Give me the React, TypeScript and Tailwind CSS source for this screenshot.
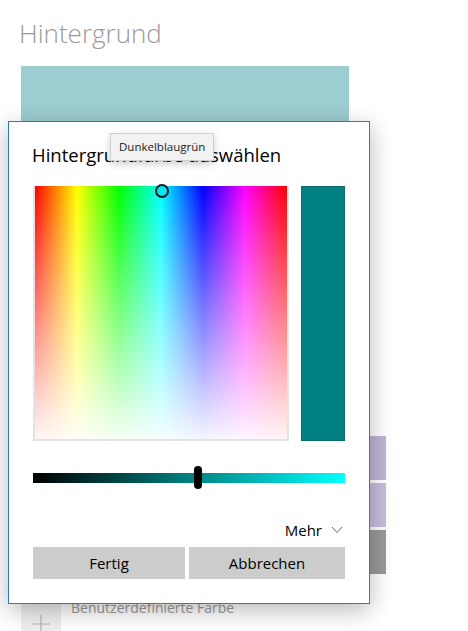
import React from 'react';

const swatchRows = [
  ['#e81123', '#ea005e', '#c30052', '#e3008c', '#bf0077', '#c239b3', '#9a0089', '#c0b4d6'],
  ['#0078d7', '#0063b1', '#8e8cd8', '#6b69d6', '#8764b8', '#744da9', '#b146c2', '#c8bcdc'],
  ['#00b294', '#038387', '#00cc6a', '#10893e', '#7a7574', '#5d5a58', '#68768a', '#999999'],
];

const App = () => {
  return (
    <div className="relative w-[468px] h-[631px] overflow-hidden bg-white font-['Open_Sans',sans-serif]">
      {/* Settings page behind the dialog */}
      <div className="pl-[21px] pt-[15px]">
        <h1 className="-ml-[2px] text-[26px] font-light leading-[36px] text-[#999999]">Hintergrund</h1>
        <div className="mt-[15px] w-[328px] h-[110px] bg-[#9ccdd0]" />

        <div className="mt-[260px] flex flex-col gap-[3px]">
          {swatchRows.map((row, i) => (
            <div key={i} className="flex gap-[3px]">
              {row.map((c, j) => (
                <div key={j} className="w-[43px] h-[44px]" style={{ backgroundColor: c }} />
              ))}
            </div>
          ))}
        </div>

        <div className="mt-[30px] flex items-start gap-[10px]">
          <div className="w-[40px] h-[40px] bg-[#eeeeee] flex items-center justify-center">
            <svg width="20" height="20" viewBox="0 0 20 20">
              <path d="M10 1v18M1 10h18" stroke="#b3b3b3" strokeWidth="1.2" fill="none" />
            </svg>
          </div>
          <span className="-mt-[7px] text-[14px] text-[#999999]">Benutzerdefinierte Farbe</span>
        </div>
      </div>

      {/* Color picker dialog */}
      <div className="absolute left-[8px] top-[121px] w-[362px] h-[483px] border border-[#2b7bc0] bg-white shadow-[0_6px_22px_rgba(0,0,0,0.28)] px-[24px] pt-[17px]">
        <h2 className="-ml-[1px] text-[18.5px] leading-[32px] text-black">Hintergrundfarbe auswählen</h2>

        <div className="mt-[15px] flex gap-[12px]">
          <div className="relative w-[256px] h-[255px] border-2 border-t-0 border-[#e3e3e3] bg-[linear-gradient(to_right,#ff0000,#ffff00,#00ff00,#00ffff,#0000ff,#ff00ff,#ff0000)]">
            <div className="absolute inset-0 bg-[linear-gradient(to_bottom,rgba(255,255,255,0),rgba(255,255,255,0.96))]" />
            <div className="absolute left-[120px] -top-[2px] w-[14px] h-[14px] rounded-full border-2 border-[#1a1a1a] bg-[#00eaf2]" />
          </div>
          <div className="w-[44px] h-[255px] bg-[#008080] border border-[#0b6d6d]" />
        </div>

        <div className="relative mt-[32px] h-[10px] bg-[linear-gradient(to_right,#000000,#008080,#00ffff)]">
          <div className="absolute left-[161px] -top-[7px] w-[8px] h-[23px] rounded-full bg-black" />
        </div>

        <div className="mt-[36px] flex items-center justify-end gap-[9px] pr-[2px]">
          <span className="text-[15px] leading-[22px] text-black">Mehr</span>
          <svg width="12" height="8" viewBox="0 0 12 8">
            <polyline points="1,1 6,6.5 11,1" fill="none" stroke="#666" strokeWidth="1" />
          </svg>
        </div>

        <div className="mt-[6px] flex gap-[4px]">
          <button className="w-[152px] h-[32px] bg-[#cccccc] text-[15px] text-black">Fertig</button>
          <button className="flex-1 h-[32px] bg-[#cccccc] text-[15px] text-black">Abbrechen</button>
        </div>
      </div>

      {/* Tooltip */}
      <div className="absolute left-[110px] top-[133px] h-[28px] px-[8px] flex items-center border border-[#cfcfcf] bg-[#f2f2f2] shadow-[0_3px_8px_rgba(0,0,0,0.2)] text-[11.5px] text-[#1a1a1a]">
        Dunkelblaugrün
      </div>
    </div>
  );
};

export default App;
